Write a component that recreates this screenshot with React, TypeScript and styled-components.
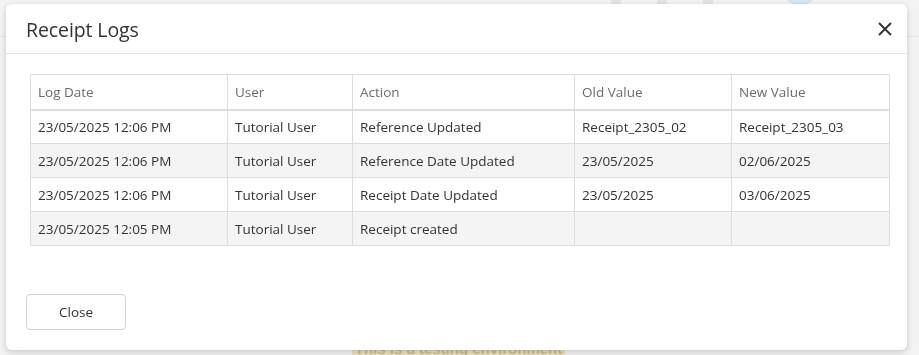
import React from 'react'
import styled, { createGlobalStyle } from 'styled-components'

const GlobalStyle = createGlobalStyle`
  html, body {
    margin: 0;
    padding: 0;
    height: 100%;
  }
  body {
    font-family: 'Open Sans', 'Noto Sans', sans-serif;
    background: #f3f3f3;
    color: #333;
    overflow: hidden;
  }
`

const Page = styled.div`
  height: 355px;
  display: flex;
  flex-direction: column;
  background: #f3f3f3;
`

const TopBar = styled.div`
  height: 36px;
  border-bottom: 1px solid #e6e6e6;
  display: flex;
  justify-content: flex-end;
  align-items: flex-start;
  padding-right: 102px;
  gap: 36px;
`

const TopIcon = styled.div`
  width: 10px;
  height: 10px;
  margin-top: -5px;
  border-radius: 3px;
  background: #e4e4e4;
`

const Avatar = styled.div`
  width: 34px;
  height: 34px;
  margin-top: -28px;
  margin-left: 34px;
  border-radius: 50%;
  background: #d3e8f3;
`

const PageBody = styled.div`
  flex: 1;
  display: flex;
  flex-direction: column;
  justify-content: flex-end;
  align-items: flex-start;
`

const Banner = styled.div`
  margin-left: 352px;
  width: 213px;
  height: 12px;
  background: #ece2bc;
  color: #c6bc9c;
  font: 600 15px 'Liberation Sans', Arial, sans-serif;
  line-height: 1;
  overflow: hidden;
  text-align: center;
  span {
    display: block;
    margin-top: -2px;
  }
`

const Backdrop = styled.div`
  position: fixed;
  inset: 0;
  padding: 4px 12px 0 6px;
`

const Modal = styled.div`
  width: 901px;
  height: 346px;
  box-sizing: border-box;
  background: #fff;
  border-radius: 6px;
  box-shadow: 0 2px 6px rgba(0, 0, 0, 0.18);
  display: flex;
  flex-direction: column;
`

const Header = styled.div`
  height: 50px;
  box-sizing: border-box;
  border-bottom: 1px solid #e3e3e3;
  display: flex;
  align-items: center;
  justify-content: space-between;
  padding: 1px 12px 0 20px;
`

const Title = styled.h4`
  margin: 0;
  font-size: 19.5px;
  font-weight: 400;
  color: #333;
  letter-spacing: -0.1px;
`

const CloseIcon = styled.button`
  border: 0;
  background: none;
  padding: 0;
  width: 20px;
  height: 20px;
  display: flex;
  align-items: center;
  justify-content: center;
  color: #333;
  cursor: pointer;
`

const Body = styled.div`
  flex: 1;
  padding: 20px 18px 0 24px;
`

const Table = styled.table`
  width: 859px;
  border-collapse: collapse;
  table-layout: fixed;
  font-size: 13.5px;
  border: 1px solid #ddd;
`

const Th = styled.th<{ $w: number }>`
  width: ${p => p.$w}px;
  height: 35px;
  box-sizing: border-box;
  padding: 0 7px;
  text-align: left;
  font-weight: 400;
  color: #6b6b6b;
  border: 1px solid #ddd;
  border-bottom: 2px solid #ddd;
`

const Row = styled.tr<{ $striped: boolean }>`
  background: ${p => (p.$striped ? '#f4f4f4' : '#fff')};
`

const Td = styled.td`
  height: 34px;
  box-sizing: border-box;
  padding: 1px 7px 0;
  color: #333;
  border: 1px solid #ddd;
  white-space: nowrap;
`

const Footer = styled.div`
  padding: 20px;
  display: flex;
`

const Button = styled.button`
  width: 100px;
  height: 36px;
  background: #fff;
  border: 1px solid #d4d4d4;
  border-radius: 4px;
  font-family: inherit;
  font-size: 13.5px;
  color: #333;
  cursor: pointer;
`

const columns = [
  { label: 'Log Date', w: 197 },
  { label: 'User', w: 125 },
  { label: 'Action', w: 222 },
  { label: 'Old Value', w: 157 },
  { label: 'New Value', w: 158 }
]

const logs = [
  ['23/05/2025 12:06 PM', 'Tutorial User', 'Reference Updated', 'Receipt_2305_02', 'Receipt_2305_03'],
  ['23/05/2025 12:06 PM', 'Tutorial User', 'Reference Date Updated', '23/05/2025', '02/06/2025'],
  ['23/05/2025 12:06 PM', 'Tutorial User', 'Receipt Date Updated', '23/05/2025', '03/06/2025'],
  ['23/05/2025 12:05 PM', 'Tutorial User', 'Receipt created', '', '']
]

export default function App () {
  return (
    <>
      <GlobalStyle />
      <Page>
        <TopBar>
          <TopIcon />
          <TopIcon />
          <TopIcon />
          <Avatar />
        </TopBar>
        <PageBody>
          <Banner><span>This is a testing environment</span></Banner>
        </PageBody>
      </Page>
      <Backdrop>
        <Modal role='dialog'>
          <Header>
            <Title>Receipt Logs</Title>
            <CloseIcon aria-label='Close'>
              <svg width='14' height='14' viewBox='0 0 14 14'>
                <path d='M1 1L13 13M13 1L1 13' stroke='currentColor' strokeWidth='1.9' />
              </svg>
            </CloseIcon>
          </Header>
          <Body>
            <Table>
              <thead>
                <tr>
                  {columns.map(c => <Th key={c.label} $w={c.w}>{c.label}</Th>)}
                </tr>
              </thead>
              <tbody>
                {logs.map((row, i) => (
                  <Row key={i} $striped={i % 2 === 1}>
                    {row.map((cell, j) => <Td key={j}>{cell}</Td>)}
                  </Row>
                ))}
              </tbody>
            </Table>
          </Body>
          <Footer>
            <Button>Close</Button>
          </Footer>
        </Modal>
      </Backdrop>
    </>
  )
}
